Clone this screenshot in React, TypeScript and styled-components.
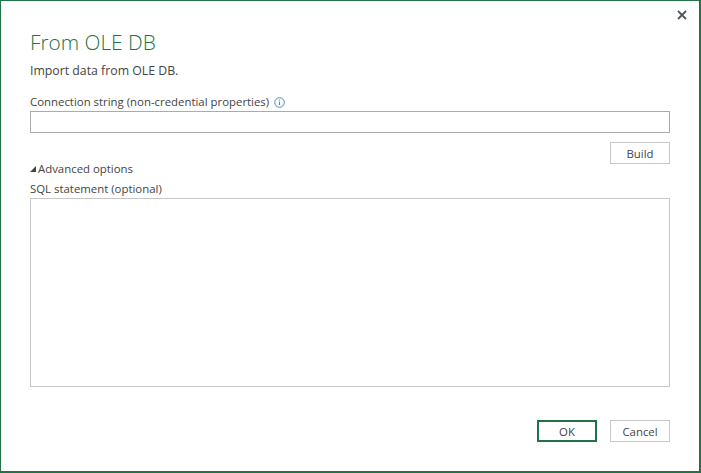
import React from "react";
import styled, { createGlobalStyle } from "styled-components";

const Global = createGlobalStyle`
  html, body { margin: 0; padding: 0; background: #ffffff; }
  * { box-sizing: border-box; }
`;

const Dialog = styled.div`
  position: relative;
  width: 701px;
  height: 473px;
  border-style: solid;
  border-color: #217346;
  border-width: 1px 2px 2px 1px;
  padding: 29px 29px 0 29px;
  display: flex;
  flex-direction: column;
  font-family: "Segoe UI", "Open Sans", "Noto Sans", sans-serif;
  font-size: 11.4px;
  color: #444444;
  background: #ffffff;
`;

const CloseButton = styled.button`
  position: absolute;
  top: 7px;
  right: 10px;
  width: 14px;
  height: 14px;
  padding: 0;
  border: none;
  background: transparent;
  display: flex;
  align-items: center;
  justify-content: center;
`;

const Title = styled.h1`
  margin: 0;
  font-size: 20.8px;
  line-height: 24px;
  font-weight: 300;
  color: #217346;
`;

const Subtitle = styled.p`
  margin: 9px 0 0 0;
  font-size: 12.3px;
  line-height: 16px;
  color: #444444;
`;

const Label = styled.label<{ $gap: number }>`
  display: flex;
  align-items: center;
  gap: 5px;
  margin-top: ${(p) => p.$gap}px;
  font-size: 11.4px;
  line-height: 16px;
  color: #444444;
`;

const TextInput = styled.input`
  margin-top: 1px;
  width: 640px;
  height: 22px;
  border: 1px solid #ababab;
  background: #ffffff;
  outline: none;
  padding: 0 4px;
  font-family: inherit;
  font-size: 11.4px;
`;

const ButtonRow = styled.div<{ $gap: number }>`
  display: flex;
  justify-content: flex-end;
  gap: 13px;
  margin-top: ${(p) => p.$gap}px;
`;

const Button = styled.button<{ $primary?: boolean }>`
  width: 60px;
  height: 22px;
  padding: 0;
  background: #ffffff;
  border: ${(p) => (p.$primary ? "2px solid #217346" : "1px solid #c6c6c6")};
  font-family: inherit;
  font-size: 11.4px;
  color: #444444;
  display: flex;
  align-items: center;
  justify-content: center;
`;

const Expander = styled.div`
  display: flex;
  align-items: center;
  gap: 2px;
  margin-top: -3px;
  font-size: 11.4px;
  line-height: 16px;
  color: #444444;
`;

const TextArea = styled.textarea`
  margin-top: 1px;
  width: 640px;
  height: 189px;
  border: 1px solid #c6c6c6;
  resize: none;
  outline: none;
  font-family: inherit;
  font-size: 11.4px;
`;

const InfoIcon = () => (
  <svg width="11" height="11" viewBox="0 0 11 11">
    <circle cx="5.5" cy="5.5" r="4.8" fill="none" stroke="#4a86c8" strokeWidth="1" />
    <rect x="5" y="4.5" width="1" height="3.5" fill="#4a86c8" />
    <rect x="5" y="2.6" width="1" height="1" fill="#4a86c8" />
  </svg>
);

export default function App() {
  return (
    <>
      <Global />
      <Dialog>
        <CloseButton aria-label="Close">
          <svg width="10" height="10" viewBox="0 0 10 10">
            <path d="M1 1 L9 9 M9 1 L1 9" stroke="#555555" strokeWidth="1.8" />
          </svg>
        </CloseButton>
        <Title>From OLE DB</Title>
        <Subtitle>Import data from OLE DB.</Subtitle>
        <Label $gap={15}>
          Connection string (non-credential properties)
          <InfoIcon />
        </Label>
        <TextInput />
        <ButtonRow $gap={9}>
          <Button>Build</Button>
        </ButtonRow>
        <Expander>
          <svg width="6" height="6" viewBox="0 0 6 6">
            <polygon points="6,0 6,6 0,6" fill="#444444" />
          </svg>
          Advanced options
        </Expander>
        <Label $gap={4}>SQL statement (optional)</Label>
        <TextArea />
        <ButtonRow $gap={33}>
          <Button $primary>OK</Button>
          <Button>Cancel</Button>
        </ButtonRow>
      </Dialog>
    </>
  );
}
